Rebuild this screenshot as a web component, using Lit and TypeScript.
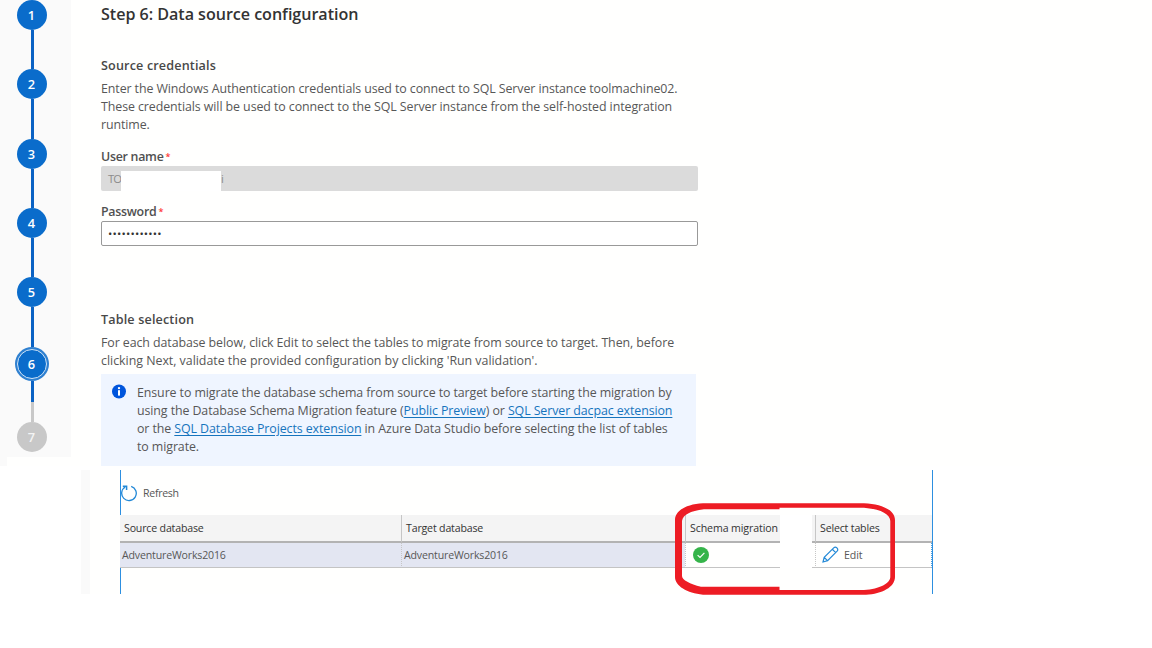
import { LitElement, html, css } from "lit";
import { customElement } from "lit/decorators.js";

@customElement("wizard-steps")
class WizardSteps extends LitElement {
  static styles = css`
    :host { display: flex; width: 71px; height: 466px; flex-direction: column; }
    .rail { display: flex; flex-direction: column; align-items: center; height: 457px; width: 71px; padding-right: 8px; box-sizing: border-box; background: #fafafa; }
    .foot { width: 7px; height: 9px; background: #fafafa; }
    .dot { width: 30px; height: 30px; flex: none; border-radius: 50%; background: #0a6ccb; color: #fff; font: 600 12.8px/30px "Open Sans", sans-serif; text-align: center; }
    .current { width: 28px; height: 28px; line-height: 28px; border: 1px solid #cfe3f6; box-shadow: 0 0 0 2px #2f80d0; margin: 2px; }
    .todo { background: #c8c8c8; color: #f4f4f4; }
    .line { width: 3px; flex: none; margin-left: 1px; background: #0a62c4; }
    .l1 { height: 39.4px; } .l2 { height: 39.5px; } .l3 { height: 39.5px; } .l4 { height: 38.5px; } .l5 { height: 40.5px; }
    .l6 { height: 20.5px; }
    .l7 { height: 20px; background: #c8c8c8; }
  `;
  render() {
    return html`<div class="rail">
        ${[1, 2, 3, 4, 5].map((n) => html`<div class="dot">${n}</div><div class="line l${n}"></div>`)}
        <div class="dot current">6</div>
        <div class="line l6"></div><div class="line l7"></div>
        <div class="dot todo">7</div>
      </div><div class="foot"></div>`;
  }
}

@customElement("app-root")
class AppRoot extends LitElement {
  static styles = css`
    :host { display: block; width: 1152px; height: 648px; overflow: hidden; background: #fff; font-family: "Open Sans", sans-serif; font-size: 12.4px; color: #575757; }
    .top { display: flex; width: 1152px; height: 466px; background: #fffffe; }
    .form { margin-left: 30px; width: 597px; display: flex; flex-direction: column; white-space: nowrap; }
    .title { height: 28px; line-height: 28px; font-size: 16.1px; font-weight: 600; color: #333; letter-spacing: -0.03px; }
    .h { font-weight: 600; height: 18px; line-height: 18px; color: #484848; font-size: 12.6px; letter-spacing: 0.15px; }
    .h1 { margin-top: 29px; }
    .p { line-height: 18px; letter-spacing: -0.09px; }
    .t { letter-spacing: -0.08px; }
    .u { letter-spacing: -0.02px; }
    .p1 { margin-top: 5px; }
    .label { height: 18px; line-height: 18px; font-weight: 600; color: #505050; letter-spacing: -0.27px; }
    .label i { color: #f33; font-style: normal; font-size: 9px; margin-left: 2px; position: relative; top: -1px; }
    .lu { margin-top: 14px; }
    .lp { margin-top: 11.5px; }
    .input { box-sizing: border-box; height: 25px; border-radius: 2px; display: flex; align-items: center; padding-left: 7px; font-size: 11.3px; }
    .user { background: #dbdbdb; color: #8c8c8c; letter-spacing: -0.9px; }
    .mask { width: 100px; height: 20px; margin-top: 5px; background: #fff; }
    .user .a { width: 13px; }
    .pass { border: 1px solid #999; background: #fff; color: #333; padding-left: 6px; letter-spacing: 0.2px; font-size: 11.4px; }
    .h2 { margin-top: 65.5px; }
    .p2 { margin-top: 5px; }
    .info { margin-top: 4px; width: 595px; height: 92px; box-sizing: border-box; background: #eff5ff; display: flex; padding: 10px 0 0 11px; }
    .info svg { flex: none; width: 15px; height: 15px; margin-right: 10px; }
    .info .p { color: #575757; }
    a { color: #1674bd; text-decoration: underline; text-underline-offset: 2px; }
    .lower { display: flex; width: 852px; height: 124px; margin: 4px 0 0 81px; background: #fffffe; font-size: 10.6px; letter-spacing: -0.17px; }
    .strip { width: 9px; background: #fafafa; }
    .panel { position: relative; margin-left: 30px; width: 813px; box-sizing: border-box; border: solid #2d8fe0; border-width: 0 1px; white-space: nowrap; }
    .refresh { height: 45px; display: flex; align-items: center; gap: 5px; box-sizing: border-box; letter-spacing: -0.3px; }
    .table { display: grid; grid-template-columns: 281px 284px 94.5px 32.5px 3px 117px; grid-template-rows: 28px 25px; width: 812px; margin-left: -1px; background: #fffffe; }
    .table > div { box-sizing: border-box; display: flex; align-items: center; }
    .th { background: #f4f4f4; border-bottom: 2px solid #b3b3b3; color: #333; padding: 0 0 1px 4px; }
    .td { border-bottom: 1px solid #c4c4c4; padding: 0 0 1px 2px; }
    .sel { background: #e3e6f2; }
    .th.b { border-left: 1px solid #c6c6c6; }
    .td.b { border-left: 1px dotted #c6c6c6; }
    .wide { letter-spacing: -0.1px; }
    .edge { padding-left: 0; }
    .blank { background: #fff; }
    .td.status { padding-left: 7px; padding-bottom: 0; }
    .td.edit { padding-left: 6px; gap: 5px; border-right: 1px dotted #4b9ee0; letter-spacing: -0.1px; }
    .mark { position: absolute; left: 549px; top: 28px; width: 230px; height: 102px; pointer-events: none; }
  `;
  render() {
    return html`
      <div class="top">
        <wizard-steps></wizard-steps>
        <div class="form">
          <div class="title"><span>Step 6: Data source configuration</span></div>
          <div class="h h1"><span>Source credentials</span></div>
          <div class="p p1">
            <span>Enter the Windows Authentication credentials used to connect to SQL Server instance toolmachine02.</span><br />
            <span class="t">These credentials will be used to connect to the SQL Server instance from the self-hosted integration</span><br />
            <span>runtime.</span>
          </div>
          <div class="label lu"><span>User name</span><i>*</i></div>
          <div class="input user"><span class="a">TO</span><div class="mask"></div><span>i</span></div>
          <div class="label lp"><span>Password</span><i>*</i></div>
          <div class="input pass"><span>••••••••••••</span></div>
          <div class="h h2"><span>Table selection</span></div>
          <div class="p p2">
            <span class="t">For each database below, click Edit to select the tables to migrate from source to target. Then, before</span><br />
            <span class="u">clicking Next, validate the provided configuration by clicking 'Run validation'.</span>
          </div>
          <div class="info">
            <svg viewBox="0 0 15 15"><circle cx="7" cy="7.5" r="7" fill="#0055dc" /><rect x="6" y="6.2" width="2" height="5.4" fill="#fff" /><circle cx="7" cy="4.1" r="1.2" fill="#fff" /></svg>
            <div class="p">
              <span>Ensure to migrate the database schema from source to target before starting the migration by</span><br />
              <span>using the Database Schema Migration feature (<a>Public Preview</a>) or <a>SQL Server dacpac extension</a></span><br />
              <span>or the <a>SQL Database Projects extension</a> in Azure Data Studio before selecting the list of tables</span><br />
              <span>to migrate.</span>
            </div>
          </div>
        </div>
      </div>
      <div class="lower">
        <div class="strip"></div>
        <div class="panel">
          <div class="refresh">
            <svg width="17" height="18" viewBox="0 0 17 18" fill="none" stroke="#2389d7" stroke-width="1.3"><path d="M10.2 2.3A7.3 7.3 0 1 1 4.2 3" /><path d="M1.8 2.2H5.6V6" stroke-width="1.5" /></svg>
            <span>Refresh</span>
          </div>
          <div class="table">
            <div class="th">Source database</div>
            <div class="th b">Target database</div>
            <div class="th b wide">Schema migration</div>
            <div class="blank"></div>
            <div class="th edge"></div>
            <div class="th b">Select tables</div>
            <div class="td sel">AdventureWorks2016</div>
            <div class="td sel b">AdventureWorks2016</div>
            <div class="td b status"><svg width="16" height="16" viewBox="0 0 16 16"><circle cx="8" cy="8" r="8" fill="#35b44a" /><path d="M4.6 8.1L7 10.4L11.4 5.8" fill="none" stroke="#fff" stroke-width="1.2" /></svg></div>
            <div class="blank"></div>
            <div class="td edge"></div>
            <div class="td b edit"><svg width="17" height="17" viewBox="0 0 17 17" fill="none" stroke="#2389d7" stroke-width="1.2"><path d="M1 16L2.2 11.4L11.7 1.9Q13.3.4 14.9 1.9Q16.5 3.6 15.1 5.2L5.6 14.7ZM10.3 3.3L13.7 6.6M2.3 11.5L5.5 14.6" /></svg><span>Edit</span></div>
          </div>
          <svg class="mark" viewBox="670 498 230 102">
            <path fill="#ed1c24" fill-rule="evenodd" d="M703 503.2H864C882 504 895 510 895 520V577C895 587 882 594 866 594.7H703C687 593 675 586 675 577V519C676 510 687 504 703 503.2ZM704 509.3H779.5V507.7H864C880 509 890.3 514 890.3 521V577C890.3 583 880 589 864 590H779.5V586.8H701C690 584 682 580 682 576V521C683 515 690 511 704 509.3Z" />
          </svg>
        </div>
      </div>`;
  }
}
